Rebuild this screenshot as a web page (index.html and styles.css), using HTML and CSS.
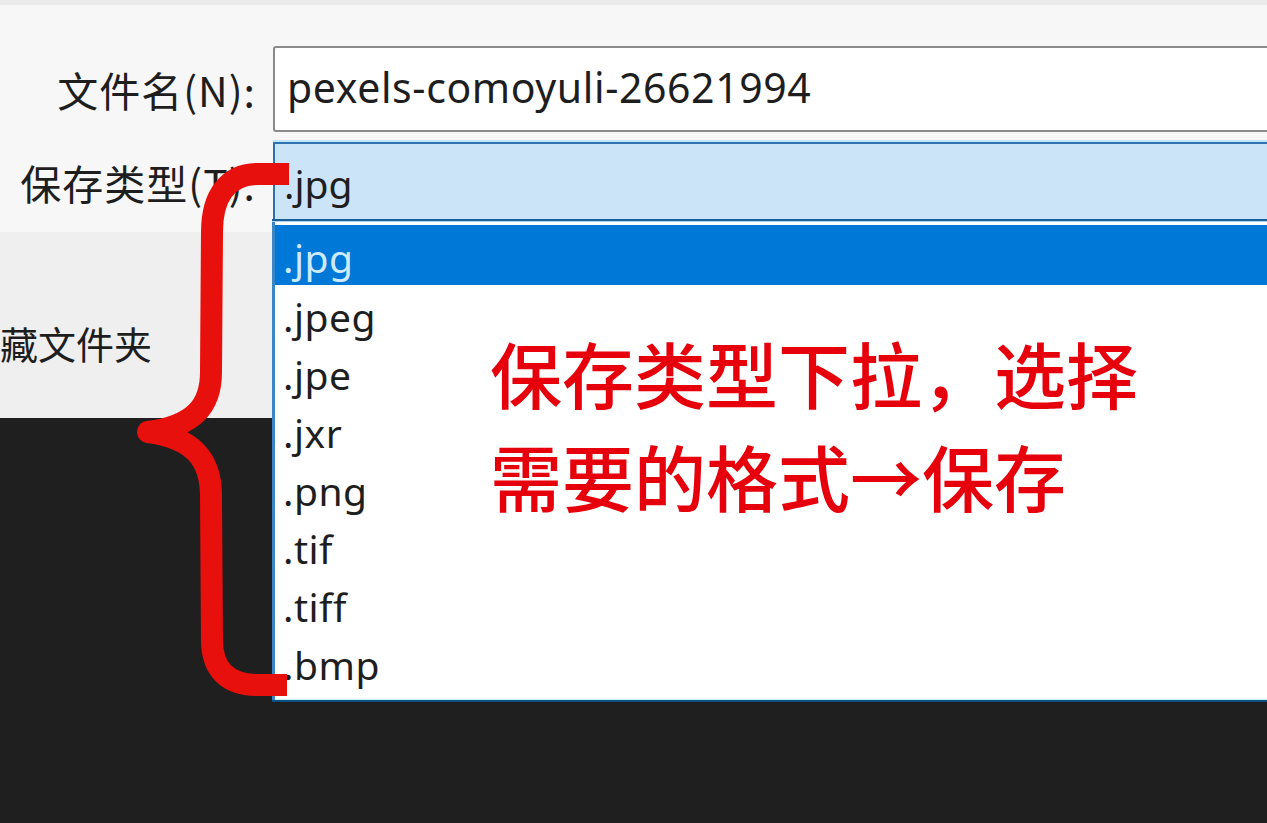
FILE: index.html
```html
<!DOCTYPE html>
<html lang="zh-CN">
<head>
<meta charset="utf-8">
<title>保存类型</title>
<link rel="stylesheet" href="styles.css">
</head>
<body>
<div class="topstrip"></div>
<div class="dialog">
  <div class="row">
    <div class="label">文件名(N):</div>
    <div class="input">pexels-comoyuli-26621994</div>
  </div>
  <div class="row row-type">
    <div class="label">保存类型(T):</div>
    <div class="combo">.jpg</div>
  </div>
</div>
<div class="lower">
  <div class="sidepanel"><span class="fav">藏文件夹</span></div>
</div>
<div class="dropdown">
  <ul class="list">
    <li class="item selected">.jpg</li>
    <li class="item">.jpeg</li>
    <li class="item">.jpe</li>
    <li class="item">.jxr</li>
    <li class="item">.png</li>
    <li class="item">.tif</li>
    <li class="item">.tiff</li>
    <li class="item">.bmp</li>
  </ul>
  <div class="note">
    <div>保存类型下拉，选择</div>
    <div>需要的格式→保存</div>
  </div>
</div>
<svg class="brace" width="1267" height="823" viewBox="0 0 1267 823">
  <path d="M289,174 L258,174 C228,174 212,196 212,232 L211,372 C211,406 194,426 148,432 C194,438 211,460 211,496 L212,640 C212,670 228,685 258,685 L287,685" fill="none" stroke="#e8100c" stroke-width="22" stroke-linejoin="round"/>
</svg>
</body>
</html>
```

FILE: styles.css
```css
html, body {
  margin: 0;
  padding: 0;
}
body {
  width: 1267px;
  height: 823px;
  overflow: hidden;
  position: relative;
  background: #1f1f1f;
  font-family: "Noto Sans CJK SC", "Noto Sans", sans-serif;
  color: #1b1b1b;
}
.topstrip {
  height: 5px;
  background: #ebebeb;
}
.dialog {
  background: #f7f7f7;
  padding: 43px 0 10px 0;
  display: flex;
  flex-direction: column;
  gap: 12px;
}
.row {
  display: flex;
  align-items: center;
  gap: 17px;
  height: 82px;
}
.row-type {
  height: 80px;
}
.label {
  width: 256px;
  flex: none;
  text-align: right;
  font-size: 41px;
  letter-spacing: 1px;
  color: #1e1e1e;
  white-space: nowrap;
}
.input {
  flex: 1;
  height: 78px;
  margin-right: -20px;
  background: #ffffff;
  border: 2px solid #8a8a8a;
  border-radius: 3px;
  box-sizing: content-box;
  display: flex;
  align-items: center;
  padding-left: 12px;
  font-family: "Noto Sans", sans-serif;
  font-size: 41px;
  letter-spacing: 0.6px;
  color: #1e1e1e;
  padding-bottom: 4px;
}
.combo {
  flex: 1;
  height: 78px;
  margin-right: -20px;
  background: #cce4f7;
  border-top: 2px solid #2f72b0;
  border-left: 2px solid #2f72b0;
  box-shadow: 0 -2px 0 #bfe6fb;
  display: flex;
  align-items: center;
  padding-left: 9px;
  font-family: "Noto Sans", sans-serif;
  font-size: 39px;
  color: #1e1e1e;
}
.lower {
  height: 186px;
  background: #efefef;
}
.sidepanel {
  padding-top: 86px;
}
.fav {
  display: block;
  margin-left: 0;
  font-size: 38px;
  line-height: 50px;
  color: #1e1e1e;
  white-space: nowrap;
}
.dropdown {
  position: absolute;
  left: 272px;
  top: 222px;
  right: -20px;
  height: 478px;
  background: #ffffff;
  border-left: 3px solid #3b86c4;
  box-shadow: 0 2px 0 #0c4f7f, 0 -1px 0 #a9d6f5, 0 -3px 0 #1b5f99, 0 -1px 0 #c6f2ff inset;
}
.list {
  list-style: none;
  margin: 0;
  padding: 3px 0 0 0;
}
.item {
  height: 58px;
  display: flex;
  align-items: center;
  padding-left: 8px;
  font-family: "Noto Sans", sans-serif;
  font-size: 39px;
  letter-spacing: 0.5px;
  color: #1e1e1e;
  padding-top: 4px;
  box-sizing: border-box;
}
.item.selected {
  height: 60px;
  background: #0078d7;
  color: #cfeaff;
}
.note {
  position: absolute;
  left: 215px;
  top: 98px;
  font-family: "Noto Sans CJK SC", sans-serif;
  font-weight: 500;
  font-size: 72px;
  line-height: 103px;
  color: #e5000c;
  white-space: nowrap;
}
.brace {
  position: absolute;
  left: 0;
  top: 0;
  pointer-events: none;
}
```
